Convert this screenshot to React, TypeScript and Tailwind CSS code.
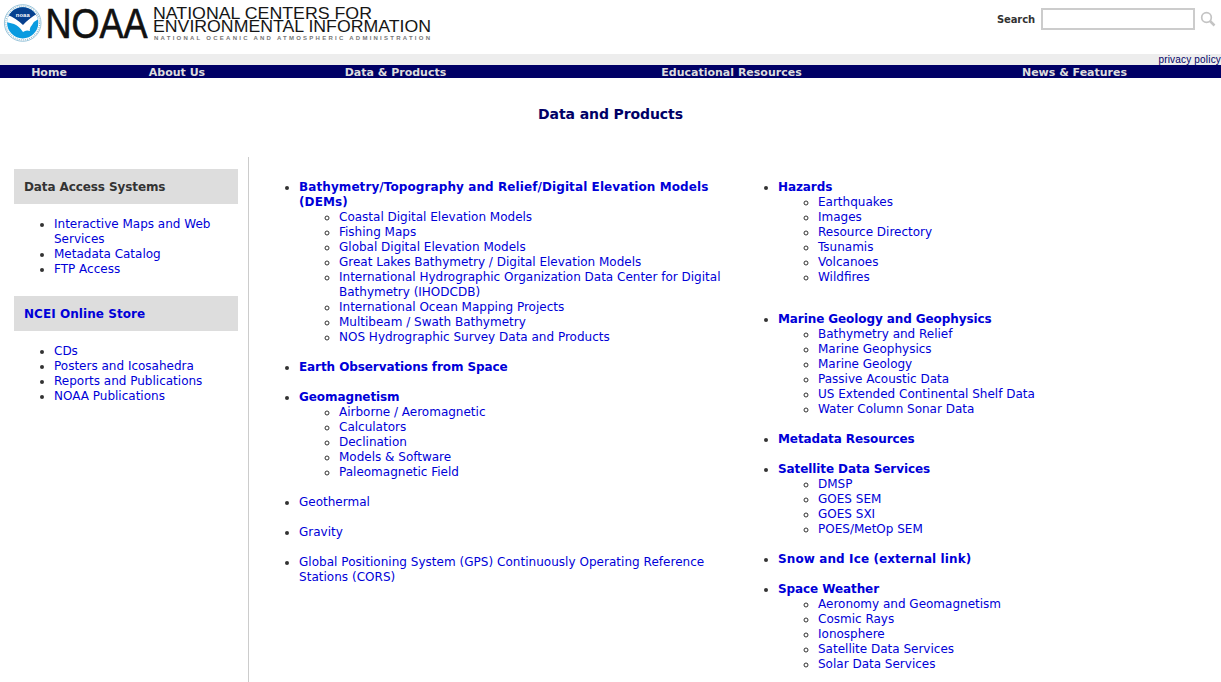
import React from "react";

type Entry = { label: string; bold?: boolean; gap?: string; tracking?: string; children?: string[] };

const left: Entry[] = [
  {
    label: "Bathymetry/Topography and Relief/Digital Elevation Models\n(DEMs)",
    bold: true,
    tracking: "tracking-[0.09px]",
    children: [
      "Coastal Digital Elevation Models",
      "Fishing Maps",
      "Global Digital Elevation Models",
      "Great Lakes Bathymetry / Digital Elevation Models",
      "International Hydrographic Organization Data Center for Digital\nBathymetry (IHODCDB)",
      "International Ocean Mapping Projects",
      "Multibeam / Swath Bathymetry",
      "NOS Hydrographic Survey Data and Products",
    ],
  },
  { label: "Earth Observations from Space", bold: true },
  {
    label: "Geomagnetism",
    bold: true,
    children: ["Airborne / Aeromagnetic", "Calculators", "Declination", "Models & Software", "Paleomagnetic Field"],
  },
  { label: "Geothermal" },
  { label: "Gravity" },
  {
    label: "Global Positioning System (GPS) Continuously Operating Reference\nStations (CORS)",
    tracking: "tracking-[0.03px]",
  },
];

const right: Entry[] = [
  {
    label: "Hazards",
    bold: true,
    gap: "mb-[27px]",
    children: ["Earthquakes", "Images", "Resource Directory", "Tsunamis", "Volcanoes", "Wildfires"],
  },
  {
    label: "Marine Geology and Geophysics",
    bold: true,
    children: [
      "Bathymetry and Relief",
      "Marine Geophysics",
      "Marine Geology",
      "Passive Acoustic Data",
      "US Extended Continental Shelf Data",
      "Water Column Sonar Data",
    ],
  },
  { label: "Metadata Resources", bold: true },
  { label: "Satellite Data Services", bold: true, children: ["DMSP", "GOES SEM", "GOES SXI", "POES/MetOp SEM"] },
  { label: "Snow and Ice (external link)", bold: true, tracking: "tracking-[0.11px]" },
  {
    label: "Space Weather",
    bold: true,
    children: ["Aeronomy and Geomagnetism", "Cosmic Rays", "Ionosphere", "Satellite Data Services", "Solar Data Services"],
  },
];

function Column({ entries }: { entries: Entry[] }) {
  return (
    <ul className="list-disc whitespace-pre">
      {entries.map((e) => (
        <li key={e.label} className={e.gap ?? "mb-[15px]"}>
          <a
            href="#"
            className={`text-[#0000d8] ${e.bold ? "font-bold" : ""} ${e.tracking ?? (e.bold ? "tracking-[-0.09px]" : "")}`}
          >
            {e.label}
          </a>
          {e.children && (
            <ul className="list-[circle] pl-10">
              {e.children.map((c) => (
                <li key={c}>
                  <a href="#" className="text-[#0000d8]">{c}</a>
                </li>
              ))}
            </ul>
          )}
        </li>
      ))}
    </ul>
  );
}

function SideList({ items }: { items: string[] }) {
  return (
    <ul className="list-disc pl-10 whitespace-pre">
      {items.map((i) => (
        <li key={i}>
          <a href="#" className="text-[#0000d8]">{i}</a>
        </li>
      ))}
    </ul>
  );
}

function Logo() {
  return (
    <svg width="440" height="46" viewBox="0 0 440 46" fontFamily="'Liberation Sans', sans-serif">
      <defs>
        <clipPath id="disc">
          <circle cx="22.7" cy="22.8" r="15.6" />
        </clipPath>
      </defs>
      <circle cx="22.7" cy="23" r="18.3" fill="#fff" stroke="#7fb6d2" strokeWidth="0.8" />
      <circle cx="22.7" cy="23" r="16.9" fill="none" stroke="#9dbccb" strokeWidth="1.2" strokeDasharray="1 1.1" />
      <g clipPath="url(#disc)">
        <rect x="5" y="5" width="36" height="36" fill="#0a9be0" />
        <path d="M5 5H41V16L34 19Q28 22 23 27.5Q17 21 10 18L5 16Z" fill="#07418f" />
        <path d="M5 14Q15 17 23 25Q29 18.5 40 12L38.5 19Q34 21 32 25Q29 28 30 31Q26 29.5 23 32Q19 26 14 24Q9 23 6 22Z" fill="#fff" />
      </g>
      <text x="22.7" y="17.4" fill="#fff" fontSize="5.8" fontWeight="bold" textAnchor="middle" textLength="14">noaa</text>
      <text x="45.5" y="38" fill="#111" stroke="#111" strokeWidth="0.7" fontSize="42" textLength="102" lengthAdjust="spacingAndGlyphs">NOAA</text>
      <text x="153" y="18.7" fill="#151515" fontSize="16.4" textLength="219" lengthAdjust="spacingAndGlyphs">NATIONAL CENTERS FOR</text>
      <text x="153" y="32.4" fill="#151515" fontSize="16.4" textLength="278" lengthAdjust="spacingAndGlyphs">ENVIRONMENTAL INFORMATION</text>
      <text x="154" y="40.3" fill="#777" fontSize="6" fontWeight="bold" textLength="276">NATIONAL OCEANIC AND ATMOSPHERIC ADMINISTRATION</text>
    </svg>
  );
}

export default function App() {
  return (
    <div className="h-[682px] overflow-hidden bg-white font-['DejaVu_Sans',sans-serif] text-[12px] leading-[15px] text-[#333]">
      <header className="flex h-[54px] items-start justify-between">
        <Logo />
        <div className="flex items-center pt-2 pr-[5px]">
          <label htmlFor="q" className="mr-[6px] text-[10px] font-bold tracking-[-0.1px]">Search</label>
          <input id="q" className="h-[22px] w-[154px] border-2 border-[#ccc] bg-white" />
          <svg className="ml-[5px]" width="16" height="20" viewBox="0 0 16 20" fill="none" stroke="#c4c4c4">
            <circle cx="6.5" cy="8.5" r="4.8" strokeWidth="1.7" />
            <path d="M10 12L14.5 16.5" strokeWidth="2.5" />
          </svg>
        </div>
      </header>
      <div className="flex h-[11px] justify-end bg-[#ededed] font-['Liberation_Sans',sans-serif] text-[10px] leading-[12px] text-[#000066]">
        <a href="#" className="tracking-[0.18px]">privacy policy</a>
      </div>
      <nav className="grid h-[13px] grid-cols-[98px_158px_279px_393px_293px] bg-[#000066] text-center text-[11px] leading-[15px] font-bold text-[#ddd]">
        <a href="#">Home</a>
        <a href="#">About Us</a>
        <a href="#">Data &amp; Products</a>
        <a href="#">Educational Resources</a>
        <a href="#">News &amp; Features</a>
      </nav>
      <h1 className="h-[79px] pt-[26px] text-center text-[14px] leading-[20px] font-bold tracking-[-0.1px] text-[#000066]">Data and Products</h1>
      <main className="flex h-[525px]">
        <aside className="w-[249px] border-r border-[#ccc] pt-3 pr-[10px] pl-[14px]">
          <h2 className="mb-[13px] h-[35px] bg-[#ddd] pl-[10px] text-[12px] leading-[36px] font-bold tracking-[-0.1px]">Data Access Systems</h2>
          <SideList items={["Interactive Maps and Web\nServices", "Metadata Catalog", "FTP Access"]} />
          <h2 className="mt-[19px] mb-[13px] h-[35px] bg-[#ddd] pl-[10px] text-[12px] leading-[36px] font-bold tracking-[0.06px] text-[#0000d8]">NCEI Online Store</h2>
          <SideList items={["CDs", "Posters and Icosahedra", "Reports and Publications", "NOAA Publications"]} />
        </aside>
        <div className="grid grid-cols-[479px_443px] pt-[23px] pl-[50px]">
          <Column entries={left} />
          <Column entries={right} />
        </div>
      </main>
    </div>
  );
}
